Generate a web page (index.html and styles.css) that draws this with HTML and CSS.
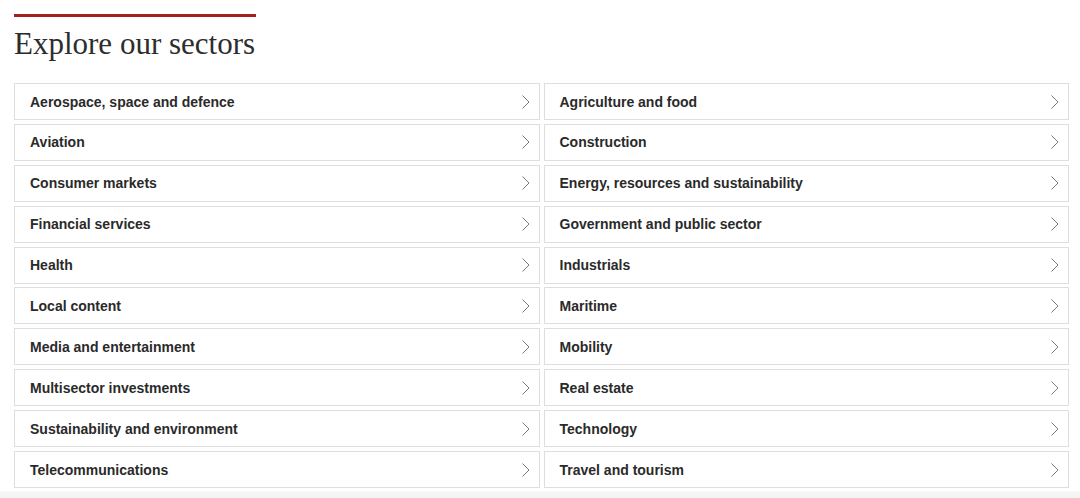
FILE: index.html
```html
<!DOCTYPE html>
<html>
<head>
<meta charset="utf-8">
<link rel="stylesheet" href="styles.css">
</head>
<body>
<section class="sectors">
  <div class="rule"></div>
  <h2 class="title">Explore our sectors</h2>
  <div class="grid">
    <a class="card"><span>Aerospace, space and defence</span><svg class="chev" viewBox="0 0 8 14"><path d="M0.5 0.5 L7 7 L0.5 13.5"/></svg></a>
    <a class="card"><span>Agriculture and food</span><svg class="chev" viewBox="0 0 8 14"><path d="M0.5 0.5 L7 7 L0.5 13.5"/></svg></a>
    <a class="card"><span>Aviation</span><svg class="chev" viewBox="0 0 8 14"><path d="M0.5 0.5 L7 7 L0.5 13.5"/></svg></a>
    <a class="card"><span>Construction</span><svg class="chev" viewBox="0 0 8 14"><path d="M0.5 0.5 L7 7 L0.5 13.5"/></svg></a>
    <a class="card"><span>Consumer markets</span><svg class="chev" viewBox="0 0 8 14"><path d="M0.5 0.5 L7 7 L0.5 13.5"/></svg></a>
    <a class="card"><span>Energy, resources and sustainability</span><svg class="chev" viewBox="0 0 8 14"><path d="M0.5 0.5 L7 7 L0.5 13.5"/></svg></a>
    <a class="card"><span>Financial services</span><svg class="chev" viewBox="0 0 8 14"><path d="M0.5 0.5 L7 7 L0.5 13.5"/></svg></a>
    <a class="card"><span>Government and public sector</span><svg class="chev" viewBox="0 0 8 14"><path d="M0.5 0.5 L7 7 L0.5 13.5"/></svg></a>
    <a class="card"><span>Health</span><svg class="chev" viewBox="0 0 8 14"><path d="M0.5 0.5 L7 7 L0.5 13.5"/></svg></a>
    <a class="card"><span>Industrials</span><svg class="chev" viewBox="0 0 8 14"><path d="M0.5 0.5 L7 7 L0.5 13.5"/></svg></a>
    <a class="card"><span>Local content</span><svg class="chev" viewBox="0 0 8 14"><path d="M0.5 0.5 L7 7 L0.5 13.5"/></svg></a>
    <a class="card"><span>Maritime</span><svg class="chev" viewBox="0 0 8 14"><path d="M0.5 0.5 L7 7 L0.5 13.5"/></svg></a>
    <a class="card"><span>Media and entertainment</span><svg class="chev" viewBox="0 0 8 14"><path d="M0.5 0.5 L7 7 L0.5 13.5"/></svg></a>
    <a class="card"><span>Mobility</span><svg class="chev" viewBox="0 0 8 14"><path d="M0.5 0.5 L7 7 L0.5 13.5"/></svg></a>
    <a class="card"><span>Multisector investments</span><svg class="chev" viewBox="0 0 8 14"><path d="M0.5 0.5 L7 7 L0.5 13.5"/></svg></a>
    <a class="card"><span>Real estate</span><svg class="chev" viewBox="0 0 8 14"><path d="M0.5 0.5 L7 7 L0.5 13.5"/></svg></a>
    <a class="card"><span>Sustainability and environment</span><svg class="chev" viewBox="0 0 8 14"><path d="M0.5 0.5 L7 7 L0.5 13.5"/></svg></a>
    <a class="card"><span>Technology</span><svg class="chev" viewBox="0 0 8 14"><path d="M0.5 0.5 L7 7 L0.5 13.5"/></svg></a>
    <a class="card"><span>Telecommunications</span><svg class="chev" viewBox="0 0 8 14"><path d="M0.5 0.5 L7 7 L0.5 13.5"/></svg></a>
    <a class="card"><span>Travel and tourism</span><svg class="chev" viewBox="0 0 8 14"><path d="M0.5 0.5 L7 7 L0.5 13.5"/></svg></a>
  </div>
</section>
<div class="next"></div>
</body>
</html>
```
FILE: styles.css
```css
html, body {
  margin: 0;
  padding: 0;
  background: #ffffff;
}
.sectors {
  padding: 14px 11px 0 14px;
}
.rule {
  width: 242px;
  height: 3px;
  background: #a32020;
}
.title {
  margin: 9px 0 0 0;
  font-family: "Liberation Serif", "Times New Roman", serif;
  font-weight: normal;
  font-size: 31px;
  line-height: 36px;
  color: #2d2d2d;
  letter-spacing: 0;
}
.grid {
  margin-top: 21px;
  display: grid;
  grid-template-columns: 1fr 1fr;
  column-gap: 4px;
  row-gap: 3.9px;
}
.card {
  height: 37px;
  box-sizing: border-box;
  border: 1px solid #dedede;
  display: flex;
  align-items: center;
  justify-content: space-between;
  padding: 0 9px 0 15px;
  font-family: "Liberation Sans", Arial, sans-serif;
  font-weight: bold;
  font-size: 14px;
  color: #2a2a2a;
  background: #fff;
}
.chev {
  width: 8px;
  height: 14px;
  fill: none;
  stroke: #7a7a7a;
  stroke-width: 1;
}
.next {
  margin-top: 3px;
  height: 12px;
  background: linear-gradient(#f7f7f7, #f0f0f0);
}
```
